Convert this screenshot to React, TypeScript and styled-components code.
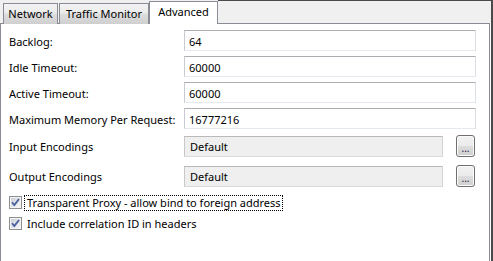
import React from "react";
import styled, { createGlobalStyle } from "styled-components";

const Global = createGlobalStyle`
  html, body { margin: 0; padding: 0; background: #f0f0f0; }
  body {
    font-family: "Noto Sans", "Open Sans", sans-serif;
    font-size: 11px;
    color: #000;
  }
`;

const Window = styled.div`
  width: 493px;
  height: 261px;
  box-sizing: border-box;
  border-right: 2px solid #4a4a4a;
  background: #f0f0f0;
  display: flex;
  flex-direction: column;
  overflow: hidden;
`;

const TabStrip = styled.div`
  height: 24px;
  display: flex;
  align-items: flex-end;
  padding-left: 3px;
  flex-shrink: 0;
`;

const Tab = styled.div<{ $active?: boolean; $w: number }>`
  position: relative;
  z-index: ${(p) => (p.$active ? 2 : 0)};
  box-sizing: border-box;
  width: ${(p) => p.$w}px;
  height: ${(p) => (p.$active ? 23 : 21)}px;
  margin-left: ${(p) => (p.$active ? 0 : 1)}px;
  border: 1px solid #898c95;
  border-bottom: none;
  background: ${(p) =>
    p.$active ? "#fff" : "linear-gradient(#f3f3f3 0%, #ebebeb 45%, #dddddd 50%, #cfcfcf 100%)"};
  padding-top: 2px;
  line-height: 15px;
  text-align: center;
  white-space: nowrap;
  &:first-child { margin-left: 0; }
`;

const Filler = styled.div`
  flex: 1;
  align-self: stretch;
  border-top: 1px solid #4a4a4a;
`;

const Panel = styled.div`
  flex: 1;
  margin-top: -1px;
  margin-right: 1px;
  box-shadow: 1px 0 0 #fff;
  background: #fff;
  border: 1px solid #898c95;
  border-bottom: none;
  padding: 6px 0 0 8px;
  display: flex;
  flex-direction: column;
`;

const Section = styled.div<{ $gap: number; $mt?: number }>`
  display: flex;
  flex-direction: column;
  gap: ${(p) => p.$gap}px;
  margin-top: ${(p) => p.$mt ?? 0}px;
`;

const FieldRow = styled.div`
  display: grid;
  grid-template-columns: 175px 292px;
  align-items: center;
`;

const Label = styled.span`
  padding-top: 1px;
  white-space: nowrap;
`;

const TextBox = styled.input`
  box-sizing: border-box;
  width: 292px;
  height: 21px;
  margin: 0;
  padding: 1px 4px 0;
  border: 1px solid;
  border-color: #abadb3 #dbdfe6 #e3e9ef #c9cbd0;
  font: inherit;
  color: #000;
  background: #fff;
  outline: none;
`;

const PickerGroup = styled.div`
  display: flex;
  align-items: center;
  gap: 13px;
`;

const ReadBox = styled.div`
  box-sizing: border-box;
  width: 259px;
  height: 21px;
  padding: 1px 5px 0;
  border: 1px solid;
  border-color: #b9b9b9 #d4d4d4 #dadada #c8c8c8;
  background: #efefef;
  line-height: 17px;
`;

const DotsButton = styled.button`
  box-sizing: border-box;
  width: 19px;
  height: 22px;
  margin: 0;
  padding: 4px 0 0;
  border: 1px solid #707070;
  border-radius: 3px;
  background: linear-gradient(#f2f2f2 0%, #ebebeb 50%, #dddddd 50%, #cfcfcf 100%);
  box-shadow: inset 0 0 0 1px #fbfbfb;
  font: inherit;
  font-size: 10px;
  line-height: 10px;
  color: #1a1a40;
  text-align: center;
`;

const CheckRow = styled.label`
  height: 17px;
  display: flex;
  align-items: center;
  gap: 2px;
`;

const CheckText = styled.span<{ $focused?: boolean }>`
  box-sizing: border-box;
  height: 16px;
  padding: 0 1px 0 2px;
  border: 1px dotted ${(p) => (p.$focused ? "#000" : "transparent")};
  line-height: 14px;
  white-space: nowrap;
`;

const Check = () => (
  <svg width="13" height="13" viewBox="0 0 13 13">
    <defs>
      <linearGradient id="cbg" x1="0" y1="0" x2="1" y2="1">
        <stop offset="0" stopColor="#cbcfd5" />
        <stop offset="1" stopColor="#f6f6f6" />
      </linearGradient>
    </defs>
    <rect x="0.5" y="0.5" width="12" height="12" fill="#f4f4f4" stroke="#8e8f8f" />
    <rect x="2" y="2" width="9" height="9" fill="url(#cbg)" />
    <path d="M3 6.2 L5.3 9 L10 3" stroke="#4a5e9e" strokeWidth="1.8" fill="none" />
  </svg>
);

const fields = [
  ["Backlog:", "64"],
  ["Idle Timeout:", "60000"],
  ["Active Timeout:", "60000"],
  ["Maximum Memory Per Request:", "16777216"],
];

export default function App() {
  return (
    <>
      <Global />
      <Window>
        <TabStrip>
          <Tab $w={55}>Network</Tab>
          <Tab $w={90}>Traffic Monitor</Tab>
          <Tab $w={69} $active>
            Advanced
          </Tab>
          <Filler />
        </TabStrip>
        <Panel>
          <Section $gap={5}>
            {fields.map(([l, v]) => (
              <FieldRow key={l}>
                <Label>{l}</Label>
                <TextBox readOnly defaultValue={v} />
              </FieldRow>
            ))}
          </Section>
          <Section $gap={8} $mt={6}>
            {["Input Encodings", "Output Encodings"].map((l) => (
              <FieldRow key={l}>
                <Label>{l}</Label>
                <PickerGroup>
                  <ReadBox>Default</ReadBox>
                  <DotsButton>...</DotsButton>
                </PickerGroup>
              </FieldRow>
            ))}
          </Section>
          <Section $gap={4} $mt={7}>
            <CheckRow>
              <Check />
              <CheckText $focused>Transparent Proxy - allow bind to foreign address</CheckText>
            </CheckRow>
            <CheckRow>
              <Check />
              <CheckText>Include correlation ID in headers</CheckText>
            </CheckRow>
          </Section>
        </Panel>
      </Window>
    </>
  );
}
